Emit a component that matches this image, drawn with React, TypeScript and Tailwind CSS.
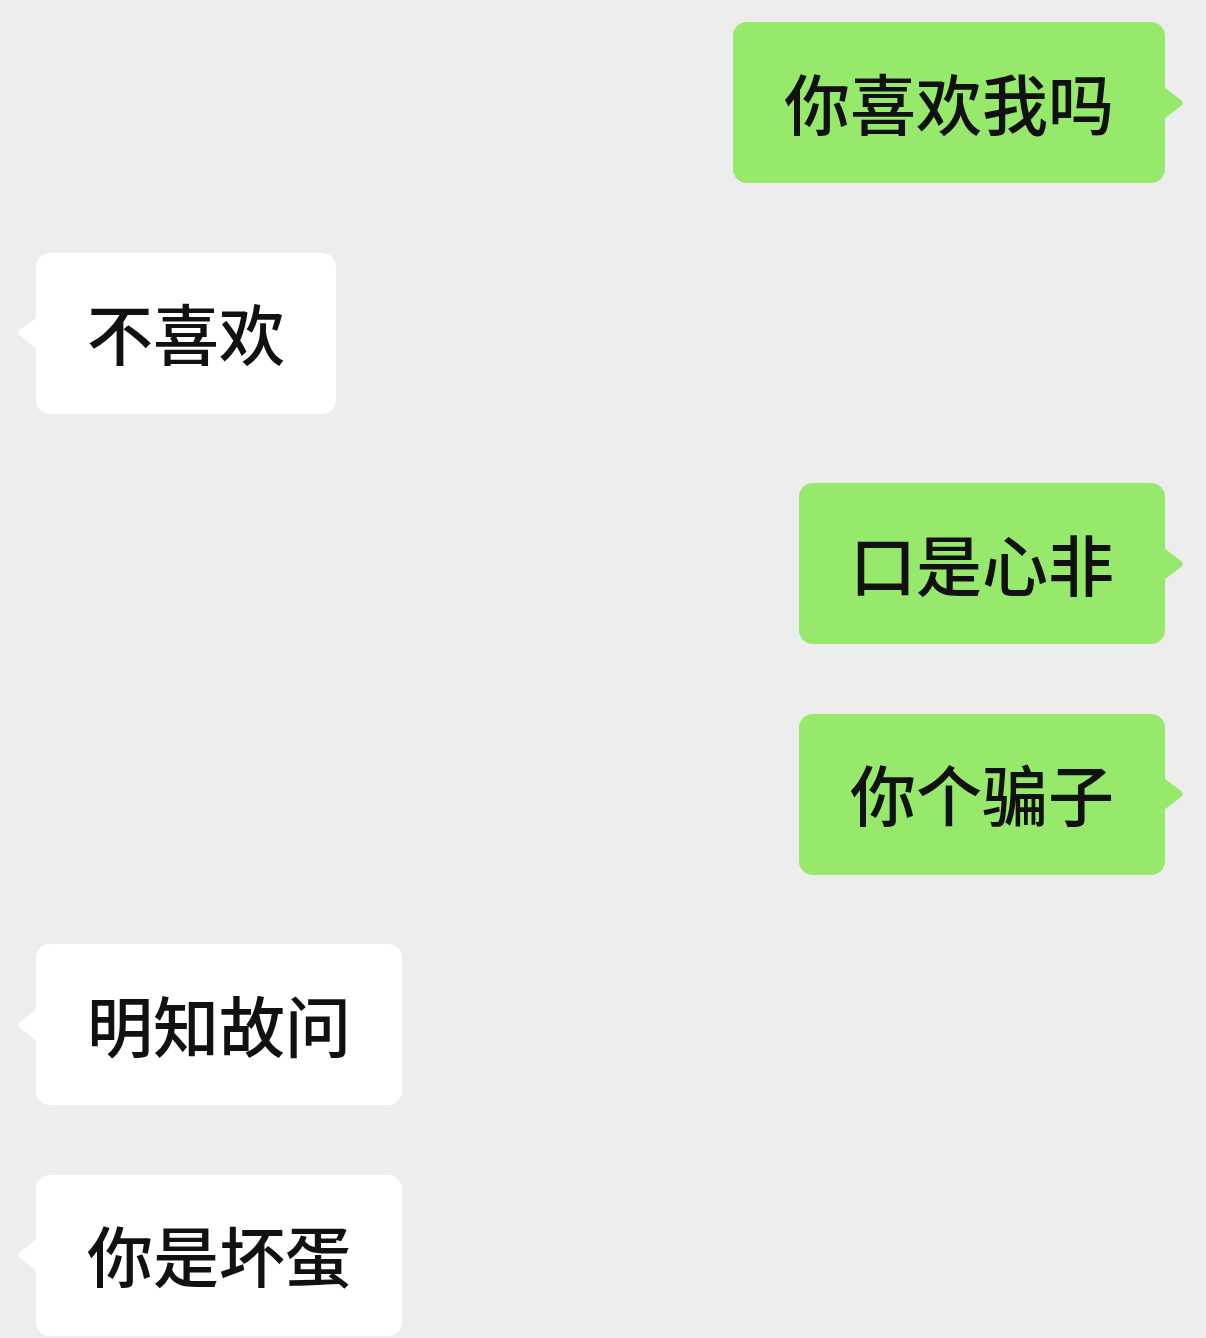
import React from 'react';

type Msg = { text: string; mine: boolean };

const messages: Msg[] = [
  { text: '你喜欢我吗', mine: true },
  { text: '不喜欢', mine: false },
  { text: '口是心非', mine: true },
  { text: '你个骗子', mine: true },
  { text: '明知故问', mine: false },
  { text: '你是坏蛋', mine: false },
];

function Tail({ mine }: { mine: boolean }) {
  return (
    <svg
      width="21"
      height="32"
      viewBox="0 0 21 32"
      className={
        mine
          ? 'absolute top-1/2 -translate-y-1/2 -right-[20px]'
          : 'absolute top-1/2 -translate-y-1/2 -left-[20px] -scale-x-100'
      }
    >
      <path d="M0 0 L17 13 Q20.5 16 17 19 L0 32 Z" fill={mine ? '#97e96b' : '#ffffff'} />
    </svg>
  );
}

function Bubble({ text, mine }: Msg) {
  return (
    <div className={mine ? 'flex justify-end' : 'flex justify-start'}>
      <div
        className={
          'relative h-[161px] flex items-center px-[51px] rounded-[14px] text-[66px] font-medium leading-none text-[#111] ' +
          (mine ? 'bg-[#97e96b]' : 'bg-white')
        }
      >
        <span className="-mt-[4px]">{text}</span>
        <Tail mine={mine} />
      </div>
    </div>
  );
}

export default function App() {
  return (
    <div
      className="w-[1206px] h-[1338px] overflow-hidden bg-[#ededed] pt-[22px] pl-[36px] pr-[41px] flex flex-col gap-[69.6px]"
      style={{ fontFamily: '"Noto Sans CJK SC", "Noto Sans", sans-serif' }}
    >
      {messages.map((m, i) => (
        <Bubble key={i} {...m} />
      ))}
    </div>
  );
}
